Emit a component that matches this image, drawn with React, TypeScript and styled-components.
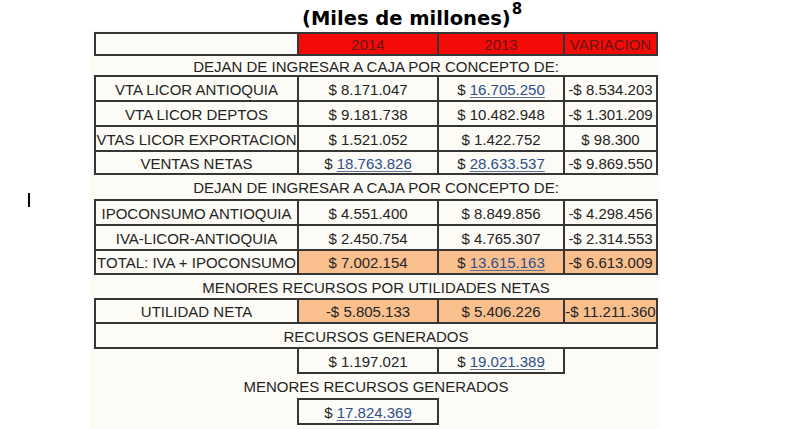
import React from "react";
import styled, { createGlobalStyle } from "styled-components";

const GlobalStyle = createGlobalStyle`
  html, body { margin: 0; padding: 0; background: #ffffff; }
  body {
    width: 808px;
    height: 429px;
    overflow: hidden;
    font-family: "Liberation Sans", Arial, sans-serif;
  }
`;

const LINE = "#363636";
const INK = "#242424";
const COLS = "203px 140px 126px 93px";

const Page = styled.div`
  width: 808px;
  height: 429px;
  display: flex;
  flex-direction: column;
`;

const TitleBar = styled.div`
  height: 30px;
  box-sizing: border-box;
  padding: 0 0 0 302px;
  display: flex;
  align-items: flex-end;
  font-family: "DejaVu Sans", Verdana, sans-serif;
  font-weight: 700;
  font-size: 19.5px;
  line-height: 22px;
  color: #000;
`;

const Sup = styled.span`
  font-size: 15px;
  position: relative;
  top: -10px;
  margin-left: 1px;
`;

const Body = styled.div`
  display: flex;
  flex: 1;
`;

const Gutter = styled.div`
  width: 90px;
  flex: none;
  box-sizing: border-box;
  padding: 163px 0 0 28px;
`;

const Caret = styled.div`
  width: 2px;
  height: 14px;
  background: #000;
`;

const Sheet = styled.div`
  width: 570px;
  flex: none;
  background: #fcfbf5;
  box-sizing: border-box;
  padding: 2px 0 0 4px;
  display: flex;
  flex-direction: column;
`;

const Table = styled.div<{ $rows: string }>`
  display: grid;
  grid-template-columns: ${COLS};
  grid-template-rows: ${(p) => p.$rows};
  width: 564px;
  box-sizing: border-box;
  border-top: 2px solid ${LINE};
  border-left: 2px solid ${LINE};
`;

const Cell = styled.div<{ $fill?: "red" | "orange"; $span?: number; $head?: boolean }>`
  box-sizing: border-box;
  display: flex;
  align-items: center;
  justify-content: center;
  border-right: 2px solid ${LINE};
  border-bottom: 2px solid ${LINE};
  white-space: nowrap;
  font-size: 15px;
  color: ${(p) => (p.$head ? "#661614" : INK)};
  background: ${(p) =>
    p.$fill === "red" ? "#f40b08" : p.$fill === "orange" ? "#f9c08e" : "transparent"};
  grid-column: ${(p) => (p.$span ? `span ${p.$span}` : "auto")};
  padding-top: 1px;
`;

const PartialRow = styled.div<{ $h: number }>`
  display: grid;
  grid-template-columns: 201px 142px 126px;
  height: ${(p) => p.$h}px;
  margin-left: 2px;
`;

const Blank = styled.div``;

const BoxCell = styled.div<{ $left?: boolean; $top?: boolean }>`
  box-sizing: border-box;
  display: flex;
  align-items: center;
  justify-content: center;
  border-right: 2px solid ${LINE};
  border-bottom: 2px solid ${LINE};
  border-left: ${(p) => (p.$left ? `2px solid ${LINE}` : "none")};
  border-top: ${(p) => (p.$top ? `2px solid ${LINE}` : "none")};
  white-space: nowrap;
  font-size: 15px;
  color: ${INK};
  padding-top: 1px;
`;

const Heading = styled.div<{ $h: number }>`
  height: ${(p) => p.$h}px;
  width: 564px;
  display: flex;
  align-items: center;
  justify-content: center;
  white-space: nowrap;
  font-size: 15px;
  color: ${INK};
  padding-top: 1px;
  box-sizing: border-box;
`;

const Amount = styled.span`
  white-space: pre;
`;

const Link = styled.span`
  color: #2d4f8c;
  text-decoration: underline;
  text-decoration-color: #5d6f96;
  text-underline-offset: 2px;
`;

type Val = { v: string; link?: boolean };
type Row = { label: string; vals: [Val, Val, Val]; orange?: boolean };

const money = (x: Val) =>
  x.link ? (
    <Amount>
      {"$ "}
      <Link>{x.v}</Link>
    </Amount>
  ) : (
    <Amount>{x.v}</Amount>
  );

const block1: Row[] = [
  { label: "VTA LICOR ANTIOQUIA", vals: [{ v: "$ 8.171.047" }, { v: "16.705.250", link: true }, { v: "-$ 8.534.203" }] },
  { label: "VTA LICOR DEPTOS", vals: [{ v: "$ 9.181.738" }, { v: "$ 10.482.948" }, { v: "-$ 1.301.209" }] },
  { label: "VTAS LICOR EXPORTACION", vals: [{ v: "$ 1.521.052" }, { v: "$ 1.422.752" }, { v: "$ 98.300" }] },
  { label: "VENTAS NETAS", vals: [{ v: "18.763.826", link: true }, { v: "28.633.537", link: true }, { v: "-$ 9.869.550" }] },
];

const block2: Row[] = [
  { label: "IPOCONSUMO ANTIOQUIA", vals: [{ v: "$ 4.551.400" }, { v: "$ 8.849.856" }, { v: "-$ 4.298.456" }] },
  { label: "IVA-LICOR-ANTIOQUIA", vals: [{ v: "$ 2.450.754" }, { v: "$ 4.765.307" }, { v: "-$ 2.314.553" }] },
  {
    label: "TOTAL: IVA + IPOCONSUMO",
    vals: [{ v: "$ 7.002.154" }, { v: "13.615.163", link: true }, { v: "-$ 6.613.009" }],
    orange: true,
  },
];

const utilidad: Row = {
  label: "UTILIDAD NETA",
  vals: [{ v: "-$ 5.805.133" }, { v: "$ 5.406.226" }, { v: "-$ 11.211.360" }],
  orange: true,
};

const DataRow = ({ row }: { row: Row }) => (
  <>
    <Cell>{row.label}</Cell>
    {row.vals.map((x, i) => (
      <Cell key={i} $fill={row.orange ? "orange" : undefined}>
        {money(x)}
      </Cell>
    ))}
  </>
);

export default function App() {
  return (
    <>
      <GlobalStyle />
      <Page>
        <TitleBar>
          (Miles de millones)<Sup>8</Sup>
        </TitleBar>
        <Body>
          <Gutter>
            <Caret />
          </Gutter>
          <Sheet>
            <Table $rows="22px">
              <Cell />
              <Cell $fill="red" $head>2014</Cell>
              <Cell $fill="red" $head>2013</Cell>
              <Cell $fill="red" $head>VARIACION</Cell>
            </Table>
            <Heading $h={19}>DEJAN DE INGRESAR A CAJA POR CONCEPTO DE:</Heading>
            <Table $rows="25px 25px 25px 23px">
              {block1.map((r) => (
                <DataRow key={r.label} row={r} />
              ))}
            </Table>
            <Heading $h={24}>DEJAN DE INGRESAR A CAJA POR CONCEPTO DE:</Heading>
            <Table $rows="25px 25px 24px">
              {block2.map((r) => (
                <DataRow key={r.label} row={r} />
              ))}
            </Table>
            <Heading $h={23}>MENORES RECURSOS POR UTILIDADES NETAS</Heading>
            <Table $rows="24px 25px">
              <DataRow row={utilidad} />
              <Cell $span={4}>RECURSOS GENERADOS</Cell>
            </Table>
            <PartialRow $h={25}>
              <Blank />
              <BoxCell $left>{money({ v: "$ 1.197.021" })}</BoxCell>
              <BoxCell>{money({ v: "19.021.389", link: true })}</BoxCell>
            </PartialRow>
            <Heading $h={24}>MENORES RECURSOS GENERADOS</Heading>
            <PartialRow $h={27}>
              <Blank />
              <BoxCell $left $top>
                {money({ v: "17.824.369", link: true })}
              </BoxCell>
            </PartialRow>
          </Sheet>
        </Body>
      </Page>
    </>
  );
}
